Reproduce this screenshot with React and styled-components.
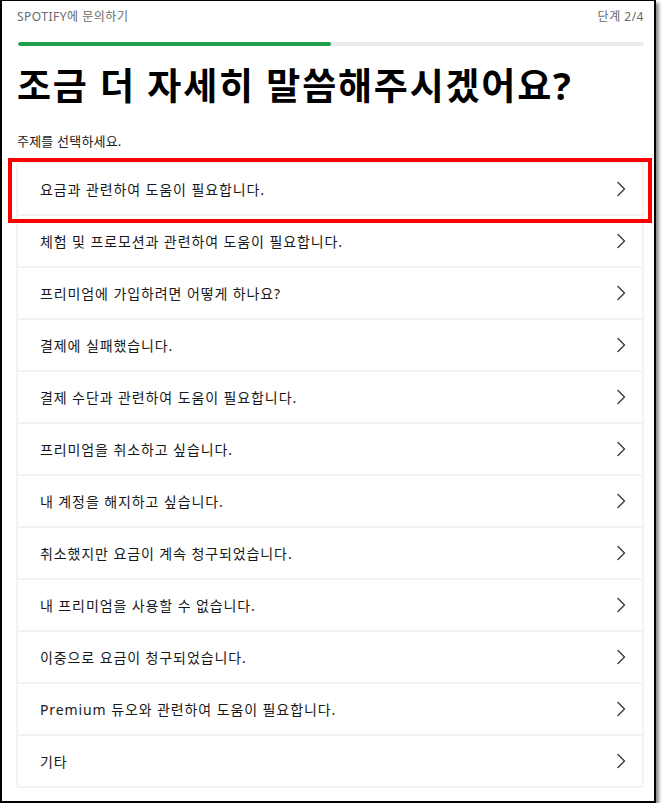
import React from 'react';
import styled, { createGlobalStyle } from 'styled-components';

const topics = [
  '요금과 관련하여 도움이 필요합니다.',
  '체험 및 프로모션과 관련하여 도움이 필요합니다.',
  '프리미엄에 가입하려면 어떻게 하나요?',
  '결제에 실패했습니다.',
  '결제 수단과 관련하여 도움이 필요합니다.',
  '프리미엄을 취소하고 싶습니다.',
  '내 계정을 해지하고 싶습니다.',
  '취소했지만 요금이 계속 청구되었습니다.',
  '내 프리미엄을 사용할 수 없습니다.',
  '이중으로 요금이 청구되었습니다.',
  'Premium 듀오와 관련하여 도움이 필요합니다.',
  '기타',
];

export default function App() {
  return (
    <>
      <GlobalStyle />
      <Frame>
        <TopBar>
          <TopLabel>SPOTIFY에 문의하기</TopLabel>
          <TopLabel>단계 2/4</TopLabel>
        </TopBar>

        <Track>
          <Fill $percent={50} />
        </Track>

        <Title>조금 더 자세히 말씀해주시겠어요?</Title>
        <Subtitle>주제를 선택하세요.</Subtitle>

        <TopicList>
          {topics.map((topic, i) => (
            <TopicRow key={topic}>
              {i === 0 && <Highlight />}
              <TopicText>{topic}</TopicText>
              <Chevron />
            </TopicRow>
          ))}
        </TopicList>
      </Frame>
    </>
  );
}

function Chevron() {
  return (
    <svg width="10" height="16" viewBox="0 0 10 16" fill="none">
      <path
        d="M2 1.5L8.5 8L2 14.5"
        stroke="#3a3a3a"
        strokeWidth="1.4"
        strokeLinecap="round"
        strokeLinejoin="round"
      />
    </svg>
  );
}

// ======================== Styled Components ========================
const GlobalStyle = createGlobalStyle`
  html, body {
    margin: 0;
    padding: 0;
    background: #fff;
  }

  body {
    font-family: "Noto Sans", "Noto Sans CJK KR", sans-serif;
  }
`;

const Frame = styled.div`
  box-sizing: border-box;
  width: 656px;
  height: 803px;
  border: 2px solid #000;
  border-top-width: 1px;
  box-shadow: 3px 3px 3px rgba(0, 0, 0, 0.45);
  padding: 7px 10px 0 14px;
  background: #fff;
  display: flex;
  flex-direction: column;
`;

const TopBar = styled.div`
  display: flex;
  justify-content: space-between;
  align-items: center;
  padding: 0 0 0 1px;
`;

const TopLabel = styled.span`
  font-size: 12px;
  line-height: 18px;
  color: #6a6a6a;
  letter-spacing: 0.5px;
`;

const Track = styled.div`
  margin: 16px 0 0 2px;
  height: 4px;
  border-radius: 2px;
  background: #ebebeb;
  overflow: hidden;
`;

const Fill = styled.div`
  height: 100%;
  width: ${(p) => p.$percent}%;
  background: #1f9f4b;
  border-radius: 2px;
`;

const Title = styled.h1`
  margin: 18px 0 0 1px;
  font-size: 37px;
  line-height: 44px;
  font-weight: 700;
  color: #000;
  letter-spacing: 1.8px;
`;

const Subtitle = styled.p`
  margin: 24px 0 0 1px;
  font-size: 13px;
  line-height: 18px;
  color: #222;
  letter-spacing: 0.2px;
`;

const TopicList = styled.div`
  margin-top: 12px;
  border: 2px solid #f3f3f3;
  border-radius: 3px;
`;

const TopicRow = styled.div`
  position: relative;
  display: flex;
  align-items: center;
  justify-content: space-between;
  height: 50px;
  padding: 0 16px 0 22px;
  border-bottom: 2px solid #f3f3f3;

  &:last-child {
    border-bottom: none;
  }
`;

const TopicText = styled.span`
  font-size: 14px;
  color: #181818;
  letter-spacing: 0.9px;
`;

const Highlight = styled.div`
  position: absolute;
  left: -10px;
  right: -10px;
  top: -6px;
  bottom: -9px;
  border: 4px solid #ff0000;
  pointer-events: none;
`;
